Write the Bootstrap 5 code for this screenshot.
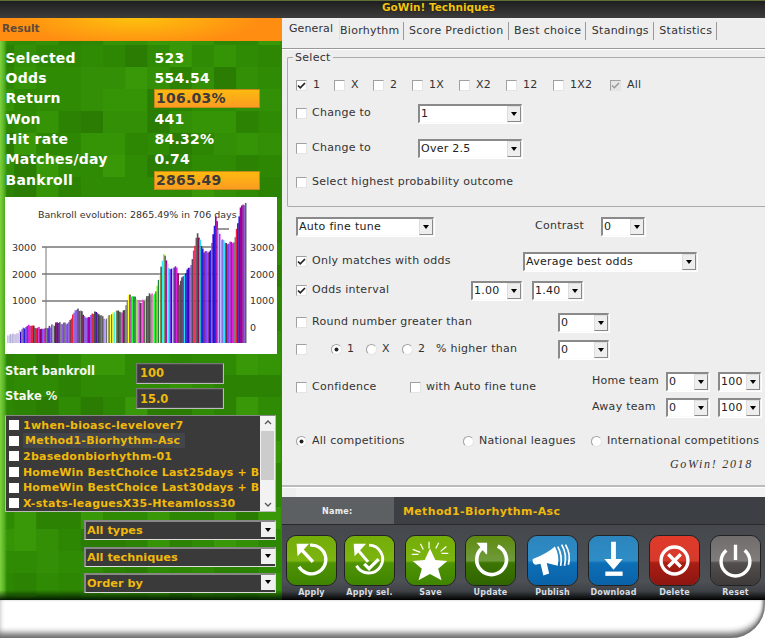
<!DOCTYPE html>
<html lang="en"><head><meta charset="utf-8"><title>GoWin! Techniques</title>
<link href="https://cdn.jsdelivr.net/npm/bootstrap@5.3.0/dist/css/bootstrap.min.css" rel="stylesheet">
<style>
html,body{margin:0;width:765px;height:638px;overflow:hidden;background:#fff;font-family:"DejaVu Sans",sans-serif;}
.win-shell{width:765px;height:638px;position:relative;overflow:hidden;}
.win-title{height:18px;background:linear-gradient(#5f6f35 0,#5f6f35 1px,#1f1f1f 1px,#3c3c3c 100%);color:#f4c514;font-weight:700;font-size:10.5px;line-height:15px;padding-left:382px;text-shadow:0 0 1px #000;}
.win-body{height:582px;}
.left-pane{width:282px;height:582px;background:#2f8a04;position:relative;overflow:hidden;}
.mosaic{position:absolute;left:0;top:0;width:282px;height:582px;}
.left-flow{position:relative;}
.res-head{height:23px;background:radial-gradient(ellipse 140px 30px at 135px 0,#fdc20c,#ff8d12 90%);color:#5d4a3a;font-weight:700;font-size:10.5px;line-height:21px;padding-left:2px;margin-bottom:6.500px;}
.stat-row{height:20.4px;display:grid;grid-template-columns:149px 105px;margin-left:5.5px;align-items:center;color:#fff;font-weight:700;font-size:14px;letter-spacing:.25px;}
.stat-hi{background:linear-gradient(#fdb90f,#fb9c22);border:1px solid #c4891a;color:#3d3a3a;height:19px;line-height:16px;padding-left:1px;margin-left:-.5px;}
.chart-box{width:272px;height:157px;background:#fff;margin:6.500px 0 9px 5px;display:block;}
.bank-row{height:21px;display:grid;grid-template-columns:131px 88px;margin-left:5px;color:#f4f8ee;font-weight:700;font-size:11.5px;align-items:center;margin-bottom:4.5px;}
.bank-row label{margin-top:-4px;}
.bank-row .form-control{height:21px;padding:0 2px 0 3px;border-radius:0;background:#3a3a3a;color:#f0b90b;font-weight:700;font-size:11.5px;border:1px solid #bbb;border-top-color:#777;border-left-color:#777;box-shadow:inset 0 0 0 1px #4a4a4a;}
.tech-list{width:271px;height:97px;margin-left:5px;margin-top:6px;background:#3a3a3a;border:1px solid #bbb;border-top-color:#888;border-radius:0;padding-top:1px;position:relative;overflow:hidden;}
.tech-list .list-group-item{height:15.8px;background:transparent;border:0;padding:0 0 0 3px;color:#f0b90b;font-weight:700;font-size:11px;letter-spacing:.25px;line-height:15px;white-space:nowrap;display:flex;align-items:center;gap:4px;width:256px;overflow:hidden;border-radius:0;}
.tech-list .list-group-item.tight{letter-spacing:.15px;}
.tech-list .list-group-item.picked span{background:#42464a;padding:0 5px 0 2px;}
.tech-list .form-check-input{width:10px;height:10px;margin:0;flex:none;border:0;border-radius:0;background:#fff;}
.scroll-rail{position:absolute;right:0;top:0;bottom:0;width:15px;background:#f2f2f2;display:flex;flex-direction:column;align-items:center;justify-content:space-between;padding:4px 0;}
.scroll-thumb{position:absolute;left:1px;right:1px;top:15px;height:49px;background:#ccc;}
.drop-gap{height:8px;}
.drop-dark{width:192px;height:20px;margin-left:84px;margin-bottom:6.3px;background:#3a3a3a;border:1px solid #ddd;border-top:2px solid #888;border-left:2px solid #888;color:#f0b90b;font-weight:700;font-size:11.3px;line-height:17px;padding-left:1px;display:flex;justify-content:space-between;}
.drop-dark b{width:14px;height:15px;background:#f0f0f0;display:flex;align-items:center;justify-content:center;}
.tri{width:0;height:0;border:3px solid transparent;border-top:4px solid #000;border-bottom:0;display:block;}
.edge-glow{position:absolute;left:0;top:23px;bottom:0;width:7px;background:linear-gradient(90deg,#7fd23e,#55b223 60%,rgba(85,178,35,0));}
.edge-base{position:absolute;left:0;right:0;bottom:0;height:10px;background:linear-gradient(rgba(0,0,0,0),#021b00);}
.right-pane{width:483px;height:582px;background:#eee;font-size:11px;color:#333;letter-spacing:.27px;}
.right-pane .nav-tabs{height:31px;border-bottom:1px solid #999;box-shadow:0 1px 0 #fff;padding:2px 0 0 7px;flex-wrap:nowrap;}
.right-pane .nav-link{border:0;border-right:1px solid #999;border-radius:0;height:18px;padding:1px 4px 0 0;margin:2px 5.500px 0 0;color:#333;line-height:15px;font-size:11px;background:transparent;letter-spacing:.25px;}
.right-pane .nav-link.active{background:transparent;margin-top:0;margin-right:0;height:20px;padding-right:6px;color:#333;letter-spacing:.1px;}
.right-pane .nav-link.tab-b{margin-right:4.500px;}
.right-pane .nav-link.tab-w{letter-spacing:.35px;}
.fs-box{height:156px;margin:2px 0 0 5px;border:1px solid #aaa;border-right:0;border-radius:2px 0 0 2px;padding:0 0 0 8px;}
.fs-box legend{float:none;width:auto;font-size:11px;margin:0 0 0 -3px;padding:0 2px 0 2px;line-height:13px;height:13px;letter-spacing:.3px;}
.form-check-input.box,.form-check-input.dot{width:11px;height:11px;margin:0;flex:none;background-color:#fff;border:1px solid #e4e4e4;border-top-color:#a0a0a0;border-left-color:#a0a0a0;box-shadow:none;}
.form-check-input.box{border-radius:0;}
.form-check-input.box:checked{background-color:#fff;background-size:11px;background-image:url("data:image/svg+xml,%3csvg xmlns='http://www.w3.org/2000/svg' viewBox='0 0 11 11'%3e%3cpath fill='none' stroke='%23222' stroke-width='1.7' d='M2 5.5l2.3 2.3L9 3'/%3e%3c/svg%3e");}
.form-check-input.box.grey:checked{background-image:url("data:image/svg+xml,%3csvg xmlns='http://www.w3.org/2000/svg' viewBox='0 0 11 11'%3e%3cpath fill='none' stroke='%23999' stroke-width='1.5' d='M2 5.5l2.3 2.3L9 3'/%3e%3c/svg%3e");background-color:#e6e6e6;}
.form-check-input.dot{border-radius:50%;}
.form-check-input.dot:checked{background-color:#fff;background-size:11px;background-image:url("data:image/svg+xml,%3csvg xmlns='http://www.w3.org/2000/svg' viewBox='0 0 11 11'%3e%3ccircle cx='5.5' cy='5.5' r='2' fill='%23222'/%3e%3c/svg%3e");}
.chk{display:flex;align-items:center;gap:5px;white-space:nowrap;margin:0;}
.combo{height:19px;background:#fff;border:2px solid #8a8a8a;border-right:1px solid #eee;border-bottom:1px solid #fafafa;display:flex;justify-content:space-between;padding-left:1px;line-height:16px;color:#222;box-shadow:1px 1px 0 #fff;}
.combo b{width:14px;height:16px;background:#eee;border:1px solid #ddd;border-right-color:#888;border-bottom-color:#888;display:flex;align-items:center;justify-content:center;font-weight:400;flex:none;}
.grow{display:grid;align-items:center;height:20px;margin-left:14px;white-space:nowrap;}
.g-opts{grid-template-columns:38px 39px 39px 47px 47px 47px 57px auto;margin:11px 0 0 0;}
.g-opts .chk{gap:6px;}
.g-chg{grid-template-columns:122px 104px;margin-left:0;}
.m7{margin-top:8px;}.m15{margin-top:15px;}.m13{margin-top:14px;}
.g-high{margin-left:0;}
.g-auto{grid-template-columns:138px 101px 66px 44px;margin-top:9px;}
.g-only{grid-template-columns:227px 174px;margin-top:15px;}
.g-odds{grid-template-columns:175px 51px 10px 51px;margin-top:9px;}
.g-round{grid-template-columns:262px 51px;margin-top:12px;}
.g-pct{grid-template-columns:35px 35px 36px 34px 122px 51px;margin-top:7px;}
.g-conf{grid-template-columns:114px 182px auto;margin-top:13px;height:46px;align-items:start;}
.conf-item{margin-top:7px;}
.team-grid{display:grid;grid-template-columns:74px 43px 9px 43px;row-gap:7px;align-items:center;}
.g-comp{grid-template-columns:167px 128px auto;margin-top:13px;}
.sig{font-family:"Liberation Serif",serif;font-style:italic;font-size:12px;letter-spacing:1.7px;text-align:right;padding-right:12px;height:17px;line-height:16px;margin-top:5px;color:#333;}
.rule-line{height:3px;background:#bbb;border-bottom:1px solid #fff;margin-top:12px;}
.rule-pad{height:9px;background:#f3f3f3;margin-left:14px;}
.name-bar{height:27px;background:#3c4044;display:flex;align-items:center;font-weight:700;}
.name-tag{width:112px;height:100%;background:#5c6062;color:#eee;font-size:8px;display:flex;align-items:center;padding:3px 0 0 40px;}
.name-val{color:#f0b90b;font-size:11px;padding:3px 0 0 9px;letter-spacing:.35px;}
.tool-bar{height:76px;background:linear-gradient(#45494d 0,#4d5155 75%,#3e4246 88%,#000 100%);display:flex;padding:10px 0 0 4px;border-top:1px solid #2a2a2a;}
.tool-btn{width:51px;display:flex;flex-direction:column;align-items:center;border:0;background:none;padding:0;color:#d6dde2;font-weight:700;font-size:8px;letter-spacing:.2px;line-height:10px;}
.tool-btn svg{width:51px;height:51px;display:block;margin-bottom:2px;border-radius:10px;border:1px solid #222;}
.gap-a{margin-right:7px;}.gap-b{margin-right:10px;}.gap-c{margin-right:10px;}.gap-d{margin-right:9px;}.gap-e{margin-right:11px;}
.foot-wrap{height:38px;background:#fff;border-bottom-right-radius:34px;box-shadow:inset 0 -7px 6px -2px #6a6a6a,inset -3px 0 3px -1px #777;}
</style></head>
<body>
<div class="win-shell">
 <div class="win-title">GoWin! Techniques</div>
 <div class="win-body d-flex">
  <aside class="left-pane">
   <svg class="mosaic" id="mosaic" viewBox="0 0 282 582" aria-hidden="true"></svg>
   <div class="edge-glow"></div><div class="edge-base"></div>
   <div class="left-flow">
    <div class="res-head">Result</div>
    <div class="stat-row"><span>Selected</span><span>523</span></div>
    <div class="stat-row"><span>Odds</span><span>554.54</span></div>
    <div class="stat-row"><span>Return</span><span class="stat-hi">106.03%</span></div>
    <div class="stat-row"><span>Won</span><span>441</span></div>
    <div class="stat-row"><span>Hit rate</span><span>84.32%</span></div>
    <div class="stat-row"><span>Matches/day</span><span>0.74</span></div>
    <div class="stat-row"><span>Bankroll</span><span class="stat-hi">2865.49</span></div>
    <svg class="chart-box" id="chart" viewBox="0 0 272 157" font-family="DejaVu Sans" font-size="9.5" fill="#333">
      <text x="33" y="21">Bankroll evolution: 2865.49% in 706 days</text>
      <g><text x="7" y="53.5">3000</text><text x="7" y="80.5">2000</text><text x="7" y="107">1000</text>
      <text x="245" y="53.5">3000</text><text x="245" y="80.5">2000</text><text x="245" y="107">1000</text><text x="245" y="134">0</text></g>
      <path d="M37 50H215M37 77H215M37 104H215" stroke="#333" stroke-width="1"/>
      <path d="M41 50V146" stroke="#777" stroke-width="1"/>
      <g id="bars"></g>
      <path d="M213 32H224" stroke="#333" stroke-width="1"/>
    </svg>
    <div class="bank-row"><label for="sb">Start bankroll</label><input id="sb" class="form-control" value="100"></div>
    <div class="bank-row"><label for="st">Stake %</label><input id="st" class="form-control" value="15.0"></div>
    <div class="list-group tech-list">
      <div class="list-group-item"><input type="checkbox" class="form-check-input"><span>1when-bioasc-levelover7</span></div>
      <div class="list-group-item picked"><input type="checkbox" class="form-check-input"><span>Method1-Biorhythm-Asc</span></div>
      <div class="list-group-item"><input type="checkbox" class="form-check-input"><span>2basedonbiorhythm-01</span></div>
      <div class="list-group-item tight"><input type="checkbox" class="form-check-input"><span>HomeWin BestChoice Last25days + B</span></div>
      <div class="list-group-item tight"><input type="checkbox" class="form-check-input"><span>HomeWin BestChoice Last30days + B</span></div>
      <div class="list-group-item"><input type="checkbox" class="form-check-input"><span>X-stats-leaguesX35-Hteamloss30</span></div>
      <div class="scroll-rail"><svg width="8" height="5" viewBox="0 0 8 5"><path d="M1 4l3-3 3 3" fill="none" stroke="#555" stroke-width="1.3"/></svg><div class="scroll-thumb"></div><svg width="8" height="5" viewBox="0 0 8 5"><path d="M1 1l3 3 3-3" fill="none" stroke="#555" stroke-width="1.3"/></svg></div>
    </div>
    <div class="drop-gap"></div>
    <div class="drop-dark"><span>All types</span><b><i class="tri"></i></b></div>
    <div class="drop-dark"><span>All techniques</span><b><i class="tri"></i></b></div>
    <div class="drop-dark"><span>Order by</span><b><i class="tri"></i></b></div>
   </div>
  </aside>
  <main class="right-pane">
   <ul class="nav nav-tabs">
    <li class="nav-item"><a class="nav-link active" href="#">General</a></li>
    <li class="nav-item"><a class="nav-link tab-b" href="#">Biorhythm</a></li>
    <li class="nav-item"><a class="nav-link tab-w" href="#">Score Prediction</a></li>
    <li class="nav-item"><a class="nav-link tab-w" href="#">Best choice</a></li>
    <li class="nav-item"><a class="nav-link" href="#">Standings</a></li>
    <li class="nav-item"><a class="nav-link" href="#">Statistics</a></li>
   </ul>
   <fieldset class="fs-box">
    <legend>Select</legend>
    <div class="grow g-opts">
     <label class="chk"><input type="checkbox" class="form-check-input box" checked>1</label>
     <label class="chk"><input type="checkbox" class="form-check-input box">X</label>
     <label class="chk"><input type="checkbox" class="form-check-input box">2</label>
     <label class="chk"><input type="checkbox" class="form-check-input box">1X</label>
     <label class="chk"><input type="checkbox" class="form-check-input box">X2</label>
     <label class="chk"><input type="checkbox" class="form-check-input box">12</label>
     <label class="chk"><input type="checkbox" class="form-check-input box">1X2</label>
     <label class="chk"><input type="checkbox" class="form-check-input box grey" checked>All</label>
    </div>
    <div class="grow g-chg m7"><label class="chk"><input type="checkbox" class="form-check-input box">Change to</label><div class="combo"><span>1</span><b><i class="tri"></i></b></div></div>
    <div class="grow g-chg m15"><label class="chk"><input type="checkbox" class="form-check-input box">Change to</label><div class="combo"><span>Over 2.5</span><b><i class="tri"></i></b></div></div>
    <div class="grow g-high m13"><label class="chk"><input type="checkbox" class="form-check-input box">Select highest probability outcome</label></div>
   </fieldset>
   <div class="grow g-auto"><div class="combo"><span>Auto fine tune</span><b><i class="tri"></i></b></div><span></span><span>Contrast</span><div class="combo"><span>0</span><b><i class="tri"></i></b></div></div>
   <div class="grow g-only"><label class="chk"><input type="checkbox" class="form-check-input box" checked>Only matches with odds</label><div class="combo"><span>Average best odds</span><b><i class="tri"></i></b></div></div>
   <div class="grow g-odds"><label class="chk"><input type="checkbox" class="form-check-input box" checked>Odds interval</label><div class="combo"><span>1.00</span><b><i class="tri"></i></b></div><span></span><div class="combo"><span>1.40</span><b><i class="tri"></i></b></div></div>
   <div class="grow g-round"><label class="chk"><input type="checkbox" class="form-check-input box">Round number greater than</label><div class="combo"><span>0</span><b><i class="tri"></i></b></div></div>
   <div class="grow g-pct"><input type="checkbox" class="form-check-input box">
     <label class="chk"><input type="radio" name="hx" class="form-check-input dot" checked>1</label>
     <label class="chk"><input type="radio" name="hx" class="form-check-input dot">X</label>
     <label class="chk"><input type="radio" name="hx" class="form-check-input dot">2</label>
     <span>% higher than</span><div class="combo"><span>0</span><b><i class="tri"></i></b></div></div>
   <div class="grow g-conf"><label class="chk conf-item"><input type="checkbox" class="form-check-input box">Confidence</label><label class="chk conf-item"><input type="checkbox" class="form-check-input box">with Auto fine tune</label>
     <div class="team-grid"><span>Home team</span><div class="combo"><span>0</span><b><i class="tri"></i></b></div><span></span><div class="combo"><span>100</span><b><i class="tri"></i></b></div>
     <span>Away team</span><div class="combo"><span>0</span><b><i class="tri"></i></b></div><span></span><div class="combo"><span>100</span><b><i class="tri"></i></b></div></div></div>
   <div class="grow g-comp"><label class="chk"><input type="radio" name="cp" class="form-check-input dot" checked>All competitions</label><label class="chk"><input type="radio" name="cp" class="form-check-input dot">National leagues</label><label class="chk"><input type="radio" name="cp" class="form-check-input dot">International competitions</label></div>
   <div class="sig">GoWin! 2018</div>
   <div class="rule-line"></div><div class="rule-pad"></div>
   <div class="name-bar"><span class="name-tag">Name:</span><span class="name-val">Method1-Biorhythm-Asc</span></div>
   <div class="tool-bar">
    <button class="tool-btn gap-a"><svg viewBox="0 0 51 51"><defs>
      <linearGradient id="gG" x1="0" y1="0" x2="0" y2="1"><stop offset="0" stop-color="#74ad08"/><stop offset=".5" stop-color="#7cb50f"/><stop offset=".55" stop-color="#4f9304"/><stop offset="1" stop-color="#3f8400"/></linearGradient>
      <linearGradient id="gD" x1="0" y1="0" x2="0" y2="1"><stop offset="0" stop-color="#5f8a10"/><stop offset=".5" stop-color="#6f9a3a"/><stop offset=".55" stop-color="#3d7502"/><stop offset="1" stop-color="#2f6400"/></linearGradient>
      <linearGradient id="gB" x1="0" y1="0" x2="0" y2="1"><stop offset="0" stop-color="#2c85bd"/><stop offset=".5" stop-color="#2f8dc6"/><stop offset=".55" stop-color="#0d6fb6"/><stop offset="1" stop-color="#0a62a8"/></linearGradient>
      <linearGradient id="gR" x1="0" y1="0" x2="0" y2="1"><stop offset="0" stop-color="#e13a2a"/><stop offset=".5" stop-color="#d53a2c"/><stop offset=".55" stop-color="#a81e14"/><stop offset="1" stop-color="#8c1610"/></linearGradient>
      <linearGradient id="gK" x1="0" y1="0" x2="0" y2="1"><stop offset="0" stop-color="#716d6d"/><stop offset=".5" stop-color="#807c7c"/><stop offset=".55" stop-color="#534f4f"/><stop offset="1" stop-color="#3e3a3a"/></linearGradient></defs>
      <rect width="51" height="51" fill="url(#gG)"/><g fill="none" stroke="#fff" stroke-width="3.4"><path d="M24 9.5A15 15 0 1 1 12.5 32"/><path d="M27 27L14 13" stroke-width="3.6"/></g><path d="M10 8H23L11 21Z" fill="#fff"/></svg>Apply</button>
    <button class="tool-btn gap-b"><svg viewBox="0 0 51 51"><rect width="51" height="51" fill="url(#gG)"/><g fill="none" stroke="#fff" stroke-width="3"><path d="M25 9.5A14.5 14.5 0 1 1 12 31"/><path d="M24 27L13 14"/><path d="M20 29l5 5 10-10" stroke-width="3.4"/></g><path d="M9 8H22L10 21Z" fill="#fff"/></svg>Apply sel.</button>
    <button class="tool-btn gap-d"><svg viewBox="0 0 51 51"><rect width="51" height="51" fill="url(#gG)"/><path d="M25 13L30.5 25L43 26L33.5 34L37 46L25 39.500L13 46L16.500 34L7 26L19.500 25Z" fill="#fff"/><path d="M7 14l8 3M6 19h7M15 8l3 6M24 6v7M34 7l-3 6M42 11l-6 5M44 18h-7" stroke="#fff" stroke-width="1.3"/></svg>Save</button>
    <button class="tool-btn gap-e"><svg viewBox="0 0 51 51"><rect width="51" height="51" fill="url(#gD)"/><path d="M35 12.500A15.500 15.500 0 1 1 19 10.500" fill="none" stroke="#fff" stroke-width="3.800" transform="matrix(-1 0 0 1 52 0)"/><path d="M11 7H22V19H21Z" fill="#fff"/></svg>Update</button>
    <button class="tool-btn gap-c"><svg viewBox="0 0 51 51"><rect width="51" height="51" fill="url(#gB)"/><path d="M5 24Q4 29 8 30L13 29L16 41L22 39L19.500 28L31 31Q33 20 28 11Q19 19 5 24Z" fill="#fff"/><g fill="none" stroke="#fff" stroke-width="1.800"><path d="M31 11Q36 20 34 31"/><path d="M35 9Q41 19 38 31"/><path d="M39 9Q45 19 42 30"/></g></svg>Publish</button>
    <button class="tool-btn gap-c"><svg viewBox="0 0 51 51"><rect width="51" height="51" fill="url(#gB)"/><path d="M23 6h5V24h7L25.500 35L16 24h7Z" fill="#fff"/><rect x="17" y="37" width="18" height="4.500" fill="#fff"/></svg>Download</button>
    <button class="tool-btn gap-c"><svg viewBox="0 0 51 51"><rect width="51" height="51" fill="url(#gR)"/><circle cx="25.500" cy="25.500" r="14" fill="none" stroke="#fff" stroke-width="3.500"/><path d="M19 19L32 32M32 19L19 32" stroke="#fff" stroke-width="3.500"/></svg>Delete</button>
    <button class="tool-btn"><svg viewBox="0 0 51 51"><rect width="51" height="51" fill="url(#gK)"/><path d="M16 15A15 15 0 1 0 35 15" fill="none" stroke="#fff" stroke-width="3.500"/><path d="M25.500 9V25" stroke="#fff" stroke-width="3.500"/></svg>Reset</button>
   </div>
  </main>
 </div>
 <div class="foot-wrap"></div>
</div>
<script src="https://cdn.jsdelivr.net/npm/bootstrap@5.3.0/dist/js/bootstrap.bundle.min.js"></script>
<script>
(function(){
 var NS='http://www.w3.org/2000/svg',seed=7;
 function rnd(){seed=(seed*16807)%2147483647;return seed/2147483647;}
 function add(p,t,a){var e=document.createElementNS(NS,t);for(var k in a)e.setAttribute(k,a[k]);p.appendChild(e);}
 var m=document.getElementById('mosaic'),tones=['#2f8a04','#2c8202','#338f05','#2a7c02','#359406','#2e8703','#399807','#2f8a04'];
 for(var r=0;r<27;r++)for(var c=0;c<13;c++){add(m,'rect',{x:c*22.2-8,y:r*22+5,width:22.4,height:22.2,fill:tones[Math.floor(rnd()*tones.length)]});}
 var pts=[[22,415],[50,408],[90,385],[130,400],[170,380],[200,380],[230,335],[260,365],[285,345],[315,370],[340,345],[370,345],[385,295],[400,300],[420,320],[445,295],[465,290],[490,170],[505,215],[530,210],[535,270],[545,240],[570,210],[590,110],[610,165],[630,165],[645,60],[660,130],[680,140],[700,140],[720,30],[735,20]];
 var pal=['#7030a0','#e020e0','#2020e0','#808080','#666','#606060','#c0c0ff','#8040ff','#a000a0','#404040','#800040','#f02040','#505050','#9060e0','#20e0ff','#4000c0'];
 var pal2=['#80ff00','#ffff20','#20ff40','#30f0f0','#707070','#606060','#a0e060','#404040','#ff40e0','#208040','#505050','#808080'];
 var b=document.getElementById('bars');
 function top(zx){for(var i=0;i<pts.length-1;i++){if(zx<=pts[i+1][0]){var t=(zx-pts[i][0])/(pts[i+1][0]-pts[i][0]);return pts[i][1]+(pts[i+1][1]-pts[i][1])*t;}}return pts[pts.length-1][1];}
 for(var x=7;x<246;x+=1.3){
  var zx=x*3;var ty=top(zx)/3+195-197;ty+=rnd()*3;
  var p=(x>105&&x<165)?pal2:pal,col=p[Math.floor(rnd()*p.length)];
  if(x<20)col=['#c8c0e8','#b0a8d8','#d0d0e8'][Math.floor(rnd()*3)];
  add(b,'rect',{x:x-5,y:ty,width:1.6,height:Math.max(0,146-ty),fill:col});
 }
})();
</script>
</body></html>
